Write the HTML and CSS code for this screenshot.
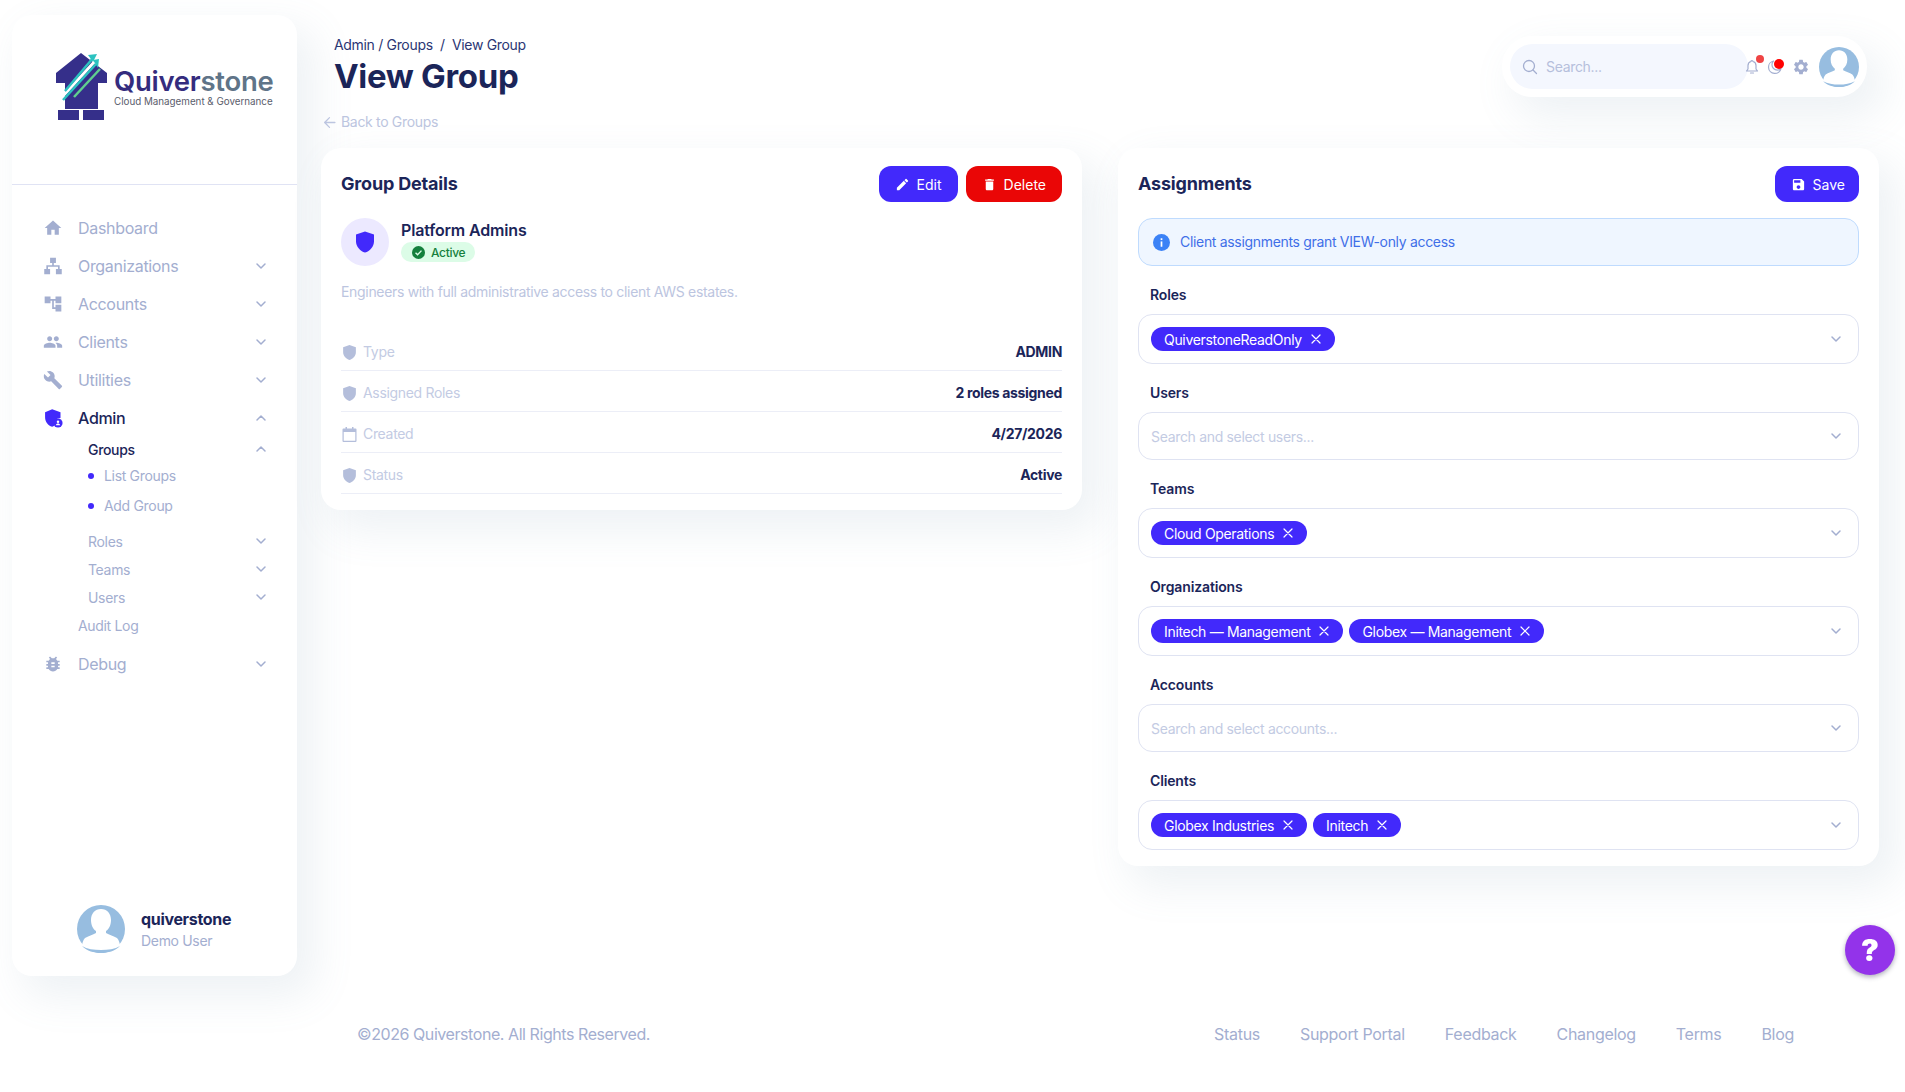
FILE: index.html
```html
<!DOCTYPE html>
<html lang="en">
<head>
    <meta charset="UTF-8">
    <title>View Group</title>
    <link rel="stylesheet" href="styles.css">
</head>
<body>
    <svg class="sprite" xmlns="http://www.w3.org/2000/svg">
        <symbol id="i-chevron" viewBox="0 0 16 16"><path d="M4 6l4 4 4-4" fill="none" stroke="currentColor" stroke-width="1.5" stroke-linecap="round" stroke-linejoin="round"/></symbol>
        <symbol id="i-up" viewBox="0 0 16 16"><path d="M4 10l4-4 4 4" fill="none" stroke="currentColor" stroke-width="1.5" stroke-linecap="round" stroke-linejoin="round"/></symbol>
        <symbol id="i-shield" viewBox="0 0 24 24"><path d="M12 1.500L3 4.600v6.600c0 5.300 4 9.900 9 11.300 5-1.400 9-6 9-11.300V4.600z" fill="currentColor"/></symbol>
        <symbol id="i-x" viewBox="0 0 12 12"><path d="M2 2l8 8M10 2l-8 8" fill="none" stroke="currentColor" stroke-width="1.200" stroke-linecap="round"/></symbol>
        <symbol id="i-avatar" viewBox="0 0 48 48">
            <circle cx="24" cy="24" r="24" fill="#97bde0"/>
            <path d="M24 4c6 0 10 4.500 10 11 0 5-2 9-5 11v2c3 2 8 3 11 5 2 2 3 6 3 8-5 4-12 5-19 5s-14-1-19-5c0-2 1-6 3-8 3-2 8-3 11-5v-2c-3-2-5-6-5-11 0-6.500 4-11 10-11z" fill="#fff"/>
            <path d="M5 41c5 3 12 4 19 4s14-1 19-4c-5 5-12 7-19 7S10 46 5 41z" fill="#97bde0"/>
        </symbol>
    </svg>

    <aside class="sidebar">
        <div class="brand">
            <svg class="brand-mark" width="52" height="67" viewBox="0 0 52 67">
                <path d="M26 0L1 20v10h9v26h33V30h9V20z" fill="#352f8a"/>
                <rect x="3" y="57" width="21" height="10" fill="#352f8a"/>
                <rect x="28" y="57" width="21" height="10" fill="#352f8a"/>
                <path d="M8 43L41 7" stroke="#fff" stroke-width="3"/>
                <path d="M10 38L38 5" stroke="#2cc2c0" stroke-width="2.500"/>
                <path d="M33 2l9-1-4 8z" fill="#2cc2c0"/>
                <path d="M8 47L41 11" stroke="#2cc2c0" stroke-width="2.500"/>
                <path d="M38 7l6-1-1 9z" fill="#2cc2c0"/>
                <path d="M19 44L45 16" stroke="#5fcf8f" stroke-width="2.500"/>
            </svg>
            <div class="brand-text">
                <div class="brand-name">Quiver<span>stone</span></div>
                <div class="brand-tag">Cloud Management &amp; Governance</div>
            </div>
        </div>

        <nav class="nav">
            <a class="nav-item">
                <svg class="nav-icon" viewBox="0 0 24 24"><path d="M10 20v-6h4v6h5v-8h3L12 3 2 12h3v8z" fill="currentColor"/></svg>
                <span class="nav-label">Dashboard</span>
            </a>
            <a class="nav-item">
                <svg class="nav-icon" viewBox="0 0 24 24"><path d="M8.500 2h7v6.500H13V11h7v4.500h2.500V22h-7v-6.500H18V13H6v2.500h2.500V22h-7v-6.500H4V11h7V8.500H8.500z" fill="currentColor"/></svg>
                <span class="nav-label">Organizations</span>
                <svg class="chev"><use href="#i-chevron"/></svg>
            </a>
            <a class="nav-item">
                <svg class="nav-icon" viewBox="0 0 24 24"><path d="M22 11V3h-7v3H9V3H2v8h7V8h2v10h4v3h7v-8h-7v3h-2V8h2v3z" fill="currentColor"/></svg>
                <span class="nav-label">Accounts</span>
                <svg class="chev"><use href="#i-chevron"/></svg>
            </a>
            <a class="nav-item">
                <svg class="nav-icon" viewBox="0 0 24 24"><path d="M16 11c1.660 0 2.990-1.340 2.990-3S17.660 5 16 5c-1.660 0-3 1.340-3 3s1.340 3 3 3zm-8 0c1.660 0 2.990-1.340 2.990-3S9.660 5 8 5C6.340 5 5 6.340 5 8s1.340 3 3 3zm0 2c-2.330 0-7 1.170-7 3.500V19h14v-2.500c0-2.330-4.670-3.500-7-3.500zm8 0c-.29 0-.62.02-.97.05 1.160.84 1.970 1.970 1.970 3.450V19h6v-2.500c0-2.330-4.670-3.500-7-3.500z" fill="currentColor"/></svg>
                <span class="nav-label">Clients</span>
                <svg class="chev"><use href="#i-chevron"/></svg>
            </a>
            <a class="nav-item">
                <svg class="nav-icon" viewBox="0 0 24 24"><path d="M22.700 19l-9.100-9.100c.9-2.300.4-5-1.500-6.900-2-2-5-2.400-7.400-1.300L9 6 6 9 1.600 4.700C.4 7.100.9 10.100 2.900 12.100c1.900 1.900 4.600 2.400 6.900 1.500l9.100 9.100c.4.400 1 .4 1.400 0l2.300-2.300c.5-.4.5-1.100.1-1.400z" fill="currentColor"/></svg>
                <span class="nav-label">Utilities</span>
                <svg class="chev"><use href="#i-chevron"/></svg>
            </a>
            <a class="nav-item is-open">
                <svg class="nav-icon" viewBox="0 0 24 24">
                    <path d="M11 1.500L2.500 5v6c0 5.500 3.600 10 8.500 11.500 1-.3 2-.8 2.800-1.400a7 7 0 017.200-9.100V5z" fill="#4229fb"/>
                    <circle cx="18" cy="18" r="5.500" fill="#4229fb"/>
                    <circle cx="18" cy="16.500" r="1.500" fill="#fff"/>
                    <path d="M15.300 20.800c.4-1.500 1.500-2.200 2.700-2.200s2.300.7 2.700 2.200z" fill="#fff"/>
                </svg>
                <span class="nav-label">Admin</span>
                <svg class="chev"><use href="#i-up"/></svg>
            </a>
            <a class="sub-item is-open">
                <span class="nav-label">Groups</span>
                <svg class="chev"><use href="#i-up"/></svg>
            </a>
            <ul class="sub-list">
                <li>List Groups</li>
                <li>Add Group</li>
            </ul>
            <a class="sub-item is-tall">
                <span class="nav-label">Roles</span>
                <svg class="chev"><use href="#i-chevron"/></svg>
            </a>
            <a class="sub-item is-tall">
                <span class="nav-label">Teams</span>
                <svg class="chev"><use href="#i-chevron"/></svg>
            </a>
            <a class="sub-item is-tall">
                <span class="nav-label">Users</span>
                <svg class="chev"><use href="#i-chevron"/></svg>
            </a>
            <a class="sub-item is-tall is-flush">
                <span class="nav-label">Audit Log</span>
            </a>
            <a class="nav-item is-last">
                <svg class="nav-icon" viewBox="0 0 24 24"><path d="M20 8h-2.810c-.45-.78-1.070-1.450-1.820-1.960L17 4.410 15.590 3l-2.170 2.170C12.960 5.060 12.490 5 12 5c-.49 0-.96.06-1.410.17L8.410 3 7 4.410l1.620 1.630C7.880 6.550 7.260 7.220 6.810 8H4v2h2.090c-.05.33-.09.66-.09 1v1H4v2h2v1c0 .34.04.67.09 1H4v2h2.810c1.040 1.790 2.970 3 5.190 3s4.150-1.210 5.190-3H20v-2h-2.090c.05-.33.09-.66.09-1v-1h2v-2h-2v-1c0-.34-.04-.67-.09-1H20V8zm-6 8h-4v-2h4v2zm0-4h-4v-2h4v2z" fill="currentColor"/></svg>
                <span class="nav-label">Debug</span>
                <svg class="chev"><use href="#i-chevron"/></svg>
            </a>
        </nav>

        <div class="sidebar-user">
            <svg width="48" height="48"><use href="#i-avatar"/></svg>
            <div>
                <div class="sidebar-user-name">quiverstone</div>
                <div class="sidebar-user-role">Demo User</div>
            </div>
        </div>
    </aside>

    <main class="main">
        <header class="topbar">
            <div class="page-head">
                <div class="crumbs">Admin / Groups&nbsp; /&nbsp; View Group</div>
                <h1>View Group</h1>
            </div>
            <div class="toolbar">
                <div class="search">
                    <svg width="16" height="16" viewBox="0 0 16 16"><circle cx="7" cy="7" r="5.500" fill="none" stroke="#a3aed0" stroke-width="1.300"/><path d="M11 11l3.500 3.500" stroke="#a3aed0" stroke-width="1.300" stroke-linecap="round"/></svg>
                    <span>Search...</span>
                </div>
                <div class="tool tool-bell">
                    <svg width="14" height="16" viewBox="0 0 14 16"><path d="M7 1.500a1 1 0 011 1c2 .5 3 2 3 4v3.500l1.500 2h-11L3 10V6.500c0-2 1-3.500 3-4a1 1 0 011-1zM5.500 14h3" fill="none" stroke="#a3aed0" stroke-width="1.200" stroke-linejoin="round" stroke-linecap="round"/></svg>
                    <i class="tool-dot"></i>
                </div>
                <div class="tool tool-moon">
                    <svg width="16" height="16" viewBox="0 0 16 16"><path d="M14 9.500A6.300 6.300 0 116.500 2a5 5 0 007.500 7.500z" fill="none" stroke="#a3aed0" stroke-width="1.200" stroke-linejoin="round"/></svg>
                    <i class="tool-dot"></i>
                </div>
                <svg class="tool-gear" width="18" height="18" viewBox="0 0 24 24"><path d="M19.140 12.940c.04-.3.06-.61.06-.94 0-.32-.02-.64-.07-.94l2.030-1.580a.49.49 0 00.12-.61l-1.920-3.320a.488.488 0 00-.59-.22l-2.390.96c-.5-.38-1.030-.7-1.620-.94l-.36-2.540a.484.484 0 00-.48-.41h-3.840c-.24 0-.43.17-.47.41l-.36 2.540c-.59.24-1.130.57-1.620.94l-2.390-.96c-.22-.08-.47 0-.59.22L2.740 8.870c-.12.21-.08.47.12.61l2.030 1.580c-.05.3-.09.63-.09.94s.02.64.07.94l-2.030 1.580a.49.49 0 00-.12.61l1.920 3.320c.12.22.37.29.59.22l2.390-.96c.5.38 1.030.7 1.620.94l.36 2.540c.05.24.24.41.48.41h3.840c.24 0 .44-.17.47-.41l.36-2.540c.59-.24 1.130-.56 1.620-.94l2.390.96c.22.08.47 0 .59-.22l1.920-3.320c.12-.22.07-.47-.12-.61l-2.010-1.580zM12 15.600c-1.980 0-3.600-1.620-3.600-3.600s1.620-3.600 3.600-3.600 3.600 1.620 3.600 3.600-1.620 3.600-3.600 3.600z" fill="#a3aed0"/></svg>
                <svg width="40" height="40"><use href="#i-avatar"/></svg>
            </div>
        </header>

        <a class="back-link">
            <svg width="13" height="13" viewBox="0 0 12 12"><path d="M6 1.500L1.500 6 6 10.500M1.500 6H11" fill="none" stroke="currentColor" stroke-width="1.200" stroke-linecap="round" stroke-linejoin="round"/></svg>
            Back to Groups
        </a>

        <div class="columns">
            <section class="card">
                <div class="card-head">
                    <h2>Group Details</h2>
                    <div class="card-actions">
                        <button class="btn">
                            <svg width="15" height="15" viewBox="0 0 24 24"><path d="M3 17.250V21h3.750L17.810 9.940l-3.750-3.750L3 17.250zM20.710 7.040a1 1 0 000-1.410l-2.340-2.340a1 1 0 00-1.410 0l-1.830 1.830 3.750 3.750 1.830-1.830z" fill="#fff"/></svg>
                            Edit
                        </button>
                        <button class="btn btn-danger">
                            <svg width="15" height="15" viewBox="0 0 24 24"><path d="M6 19c0 1.100.9 2 2 2h8c1.100 0 2-.9 2-2V7H6v12zM19 4h-3.500l-1-1h-5l-1 1H5v2h14V4z" fill="#fff"/></svg>
                            Delete
                        </button>
                    </div>
                </div>

                <div class="group-id">
                    <div class="group-badge"><svg width="24" height="24"><use href="#i-shield"/></svg></div>
                    <div>
                        <div class="group-name">Platform Admins</div>
                        <span class="status-pill">
                            <svg width="13" height="13" viewBox="0 0 14 14"><circle cx="7" cy="7" r="7" fill="#15803d"/><path d="M3.800 7.200l2.200 2.200 4.200-4.400" fill="none" stroke="#dcfce7" stroke-width="1.500"/></svg>
                            Active
                        </span>
                    </div>
                </div>

                <p class="group-desc">Engineers with full administrative access to client AWS estates.</p>

                <dl class="facts">
                    <div class="fact">
                        <dt><svg width="17" height="17"><use href="#i-shield"/></svg>Type</dt>
                        <dd>ADMIN</dd>
                    </div>
                    <div class="fact">
                        <dt><svg width="17" height="17"><use href="#i-shield"/></svg>Assigned Roles</dt>
                        <dd>2 roles assigned</dd>
                    </div>
                    <div class="fact">
                        <dt><svg width="17" height="17" viewBox="-1.500 -.5 17 17"><path d="M3 .5h1.500V2h5V.5H11V2h2a1 1 0 011 1v11.500a1 1 0 01-1 1H1a1 1 0 01-1-1V3a1 1 0 011-1h2zM1.200 5.500v8.800h11.600V5.500z" fill="currentColor"/></svg>Created</dt>
                        <dd>4/27/2026</dd>
                    </div>
                    <div class="fact">
                        <dt><svg width="17" height="17"><use href="#i-shield"/></svg>Status</dt>
                        <dd>Active</dd>
                    </div>
                </dl>
            </section>

            <section class="card">
                <div class="card-head">
                    <h2>Assignments</h2>
                    <button class="btn btn-save">
                        <svg width="15" height="15" viewBox="0 0 24 24"><path d="M17 3H5a2 2 0 00-2 2v14c0 1.100.9 2 2 2h14c1.100 0 2-.9 2-2V7l-4-4zm-5 16c-1.660 0-3-1.340-3-3s1.340-3 3-3 3 1.340 3 3-1.340 3-3 3zm3-10H5V5h10v4z" fill="#fff"/></svg>
                        Save
                    </button>
                </div>

                <div class="notice">
                    <svg width="17" height="17" viewBox="0 0 16 16"><circle cx="8" cy="8" r="8" fill="#3b82f6"/><rect x="7.200" y="7" width="1.600" height="5" fill="#fff"/><rect x="7.200" y="4" width="1.600" height="1.700" fill="#fff"/></svg>
                    <span>Client assignments grant VIEW-only access</span>
                </div>

                <div class="field">
                    <label>Roles</label>
                    <div class="select">
                        <span class="chip">QuiverstoneReadOnly <svg><use href="#i-x"/></svg></span>
                        <svg class="chev"><use href="#i-chevron"/></svg>
                    </div>
                </div>
                <div class="field">
                    <label>Users</label>
                    <div class="select is-empty">
                        <span class="placeholder">Search and select users...</span>
                        <svg class="chev"><use href="#i-chevron"/></svg>
                    </div>
                </div>
                <div class="field">
                    <label>Teams</label>
                    <div class="select">
                        <span class="chip">Cloud Operations <svg><use href="#i-x"/></svg></span>
                        <svg class="chev"><use href="#i-chevron"/></svg>
                    </div>
                </div>
                <div class="field">
                    <label>Organizations</label>
                    <div class="select">
                        <span class="chip">Initech — Management <svg><use href="#i-x"/></svg></span>
                        <span class="chip">Globex — Management <svg><use href="#i-x"/></svg></span>
                        <svg class="chev"><use href="#i-chevron"/></svg>
                    </div>
                </div>
                <div class="field">
                    <label>Accounts</label>
                    <div class="select is-empty">
                        <span class="placeholder">Search and select accounts...</span>
                        <svg class="chev"><use href="#i-chevron"/></svg>
                    </div>
                </div>
                <div class="field">
                    <label>Clients</label>
                    <div class="select">
                        <span class="chip">Globex Industries <svg><use href="#i-x"/></svg></span>
                        <span class="chip">Initech <svg><use href="#i-x"/></svg></span>
                        <svg class="chev"><use href="#i-chevron"/></svg>
                    </div>
                </div>
            </section>
        </div>

        <footer class="footer">
            <span class="footer-copy">©2026 Quiverstone. All Rights Reserved.</span>
            <div class="footer-links">
                <a>Status</a>
                <a>Support Portal</a>
                <a>Feedback</a>
                <a>Changelog</a>
                <a>Terms</a>
                <a>Blog</a>
            </div>
        </footer>
    </main>

    <button class="help-btn">?</button>
</body>
</html>
```

FILE: styles.css
```css
* {
    box-sizing: border-box;
}
body {
    margin: 0;
    height: 100vh;
    display: flex;
    overflow: hidden;
    background-color: #ffffff;
    color: #1b2559;
    font-family: Inter, "Liberation Sans", sans-serif;
    letter-spacing: -0.02em;
}
h1, h2, p, dl, dd, ul {
    margin: 0;
    padding: 0;
}
.sprite {
    display: none;
}

/* sidebar */
.sidebar {
    flex: none;
    width: 285px;
    height: 961px;
    margin: 15px 0 0 12px;
    display: flex;
    flex-direction: column;
    background-color: #fff;
    border-radius: 20px;
    box-shadow: 14px 17px 40px 4px rgba(112, 144, 176, 0.12);
}
.brand {
    height: 170px;
    padding: 38px 0 0 43px;
    display: flex;
    gap: 7px;
    border-bottom: 1px solid #e0e3f4;
}
.brand-text {
    padding-top: 13px;
}
.brand-name {
    font-size: 27.5px;
    line-height: 30px;
    font-weight: 600;
    color: #342c7e;
    letter-spacing: -0.01em;
}
.brand-name span {
    color: #5f7488;
}
.brand-tag {
    margin-top: -1px;
    font-size: 9.8px;
    line-height: 13px;
    color: #5a5d6c;
    letter-spacing: 0;
}
.nav {
    padding: 24px 0 0 31px;
    color: #a3aed0;
}
.nav-item, .sub-item {
    display: flex;
    align-items: center;
    padding-right: 28px;
}
.nav-item {
    height: 38px;
    font-size: 16px;
}
.nav-icon {
    flex: none;
    width: 20px;
    height: 20px;
    margin-right: 15px;
}
.nav-label {
    flex: 1;
}
.chev {
    flex: none;
    width: 16px;
    height: 16px;
    color: #a3aed0;
}
.nav-item.is-open, .sub-item.is-open {
    color: #1b2559;
    font-weight: 500;
}
.nav-item.is-last {
    margin-top: 6px;
}
.sub-item {
    height: 24px;
    margin-left: -31px;
    padding-left: 76px;
    font-size: 14px;
}
.sub-item.is-tall {
    height: 28px;
}
.sub-item.is-flush {
    padding-left: 66px;
}
.sub-list {
    list-style: none;
    padding-left: 45px;
    margin-bottom: 6px;
    font-size: 14px;
}
.sub-list li {
    height: 30px;
    line-height: 30px;
    display: flex;
    align-items: center;
    gap: 10px;
}
.sub-list li::before {
    content: "";
    width: 6px;
    height: 6px;
    border-radius: 50%;
    background-color: #4229fb;
}
.sidebar-user {
    margin-top: auto;
    padding: 0 0 23px 65px;
    display: flex;
    align-items: center;
    gap: 16px;
}
.sidebar-user-name {
    font-size: 16px;
    line-height: 22px;
    font-weight: 700;
}
.sidebar-user-role {
    margin-top: 1px;
    font-size: 14px;
    line-height: 20px;
    color: #a3aed0;
}

/* main column */
.main {
    flex: none;
    width: 1558px;
    margin-left: 24px;
    padding-top: 36px;
    display: flex;
    flex-direction: column;
}
.topbar {
    display: flex;
    justify-content: space-between;
    padding: 0 12px 0 13px;
}
.crumbs {
    font-size: 14px;
    line-height: 18px;
    color: #2b3674;
}
h1 {
    margin-top: 2px;
    font-size: 33px;
    line-height: 40px;
    font-weight: 700;
}
.toolbar {
    width: 365px;
    height: 61px;
    padding: 0 8px;
    display: flex;
    align-items: center;
    background-color: #fff;
    border-radius: 30px;
    box-shadow: 14px 17px 40px 4px rgba(112, 144, 176, 0.12);
}
.search {
    flex: none;
    width: 238px;
    height: 45px;
    padding-left: 12px;
    display: flex;
    align-items: center;
    gap: 8px;
    font-size: 14px;
    color: #b6bfdc;
    background-color: #f4f7fe;
    border-radius: 23px;
}
.tool {
    position: relative;
    height: 16px;
}
.tool-bell {
    margin-left: -3px;
}
.tool-moon {
    margin-left: 8px;
}
.tool-dot {
    position: absolute;
    width: 8px;
    height: 8px;
    top: -4px;
    right: -5px;
    border-radius: 50%;
    background-color: #ef4444;
}
.tool-moon .tool-dot {
    width: 10px;
    height: 10px;
    top: 0;
    right: -1px;
    background-color: #ff0000;
}
.tool-gear {
    margin: 0 9px;
}
.back-link {
    margin-top: 16px;
    padding-left: 2px;
    display: flex;
    align-items: center;
    gap: 5px;
    font-size: 14px;
    line-height: 18px;
    color: #bcc5e0;
}
.columns {
    margin-top: 17px;
    display: grid;
    grid-template-columns: 761px 761px;
    gap: 36px;
    align-items: start;
}

/* cards */
.card {
    padding: 18px 20px 16px;
    background-color: #fff;
    border-radius: 20px;
    box-shadow: 14px 17px 40px 4px rgba(112, 144, 176, 0.12);
}
.card-head {
    display: flex;
    justify-content: space-between;
    align-items: center;
    height: 36px;
}
h2 {
    margin-top: -2px;
    font-size: 18px;
    font-weight: 700;
    letter-spacing: -0.01em;
}
.card-actions {
    display: flex;
    gap: 8px;
}
.btn {
    height: 36px;
    padding: 0 16px;
    display: flex;
    align-items: center;
    gap: 7px;
    border: none;
    border-radius: 12px;
    background-color: #4229fb;
    color: #fff;
    font: inherit;
    font-size: 14px;
}
.btn-danger {
    background-color: #ea0606;
}
.btn-save {
    padding-right: 14px;
}
.group-id {
    margin-top: 16px;
    display: flex;
    gap: 12px;
}
.group-badge {
    width: 48px;
    height: 48px;
    display: flex;
    align-items: center;
    justify-content: center;
    border-radius: 50%;
    background-color: #ece9ff;
    color: #4229fb;
}
.group-name {
    font-size: 16px;
    line-height: 24px;
    font-weight: 600;
    letter-spacing: -0.01em;
}
.status-pill {
    height: 20px;
    padding: 0 10px 0 11px;
    display: inline-flex;
    align-items: center;
    gap: 6px;
    font-size: 12px;
    font-weight: 500;
    color: #15803d;
    background-color: #dcfce7;
    border-radius: 10px;
}
.group-desc {
    margin-top: 16px;
    font-size: 14px;
    line-height: 20px;
    color: #bcc5e0;
}
.facts {
    margin-top: 28px;
}
.fact {
    height: 41px;
    padding: 12px 0 8px;
    display: flex;
    justify-content: space-between;
    font-size: 14px;
    line-height: 20px;
    border-bottom: 1px solid #eceef7;
}
.fact dt {
    display: flex;
    align-items: center;
    gap: 5px;
    color: #c3cbe3;
}
.fact dt svg {
    color: #b4bedb;
}
.fact dd {
    font-weight: 700;
}
.notice {
    height: 48px;
    margin: 16px 0 19px;
    padding: 0 14px;
    display: flex;
    align-items: center;
    gap: 10px;
    font-size: 14px;
    color: #3f6fe8;
    background-color: #eff6ff;
    border: 1px solid #bfdbfe;
    border-radius: 14px;
}
.notice span {
    margin-top: -2px;
}
.field {
    margin-bottom: 19px;
}
.field:last-child {
    margin-bottom: 0;
}
.field label {
    display: block;
    height: 20px;
    margin-bottom: 9px;
    padding-left: 12px;
    font-size: 14px;
    line-height: 20px;
    font-weight: 600;
    letter-spacing: -0.01em;
}
.select {
    height: 50px;
    padding: 0 14px 0 12px;
    display: flex;
    align-items: center;
    gap: 6px;
    border: 1px solid #dfe3f2;
    border-radius: 14px;
}
.select.is-empty {
    height: 48px;
}
.select .chev {
    margin-left: auto;
}
.chip {
    height: 24px;
    padding: 0 13px;
    display: flex;
    align-items: center;
    gap: 8px;
    font-size: 14px;
    color: #fff;
    white-space: nowrap;
    background-color: #4229fb;
    border-radius: 12px;
}
.chip svg {
    width: 12px;
    height: 12px;
}
.placeholder {
    font-size: 14px;
    color: #c3cbe3;
}

/* footer */
.footer {
    margin-top: auto;
    padding: 0 85px 46px 36px;
    display: flex;
    justify-content: space-between;
    font-size: 16px;
    line-height: 24px;
    color: #a3aed0;
}
.footer-copy {
    letter-spacing: -0.027em;
}
.footer-links {
    display: flex;
    gap: 40px;
    letter-spacing: -0.019em;
}
.help-btn {
    position: fixed;
    top: 925px;
    left: 1845px;
    width: 50px;
    height: 50px;
    border: none;
    border-radius: 50%;
    background-color: #9333ea;
    color: #fff;
    font-family: Inter, sans-serif;
    font-size: 30px;
    font-weight: 900;
    box-shadow: 0 2px 5px rgba(50, 50, 80, 0.4);
}
```
